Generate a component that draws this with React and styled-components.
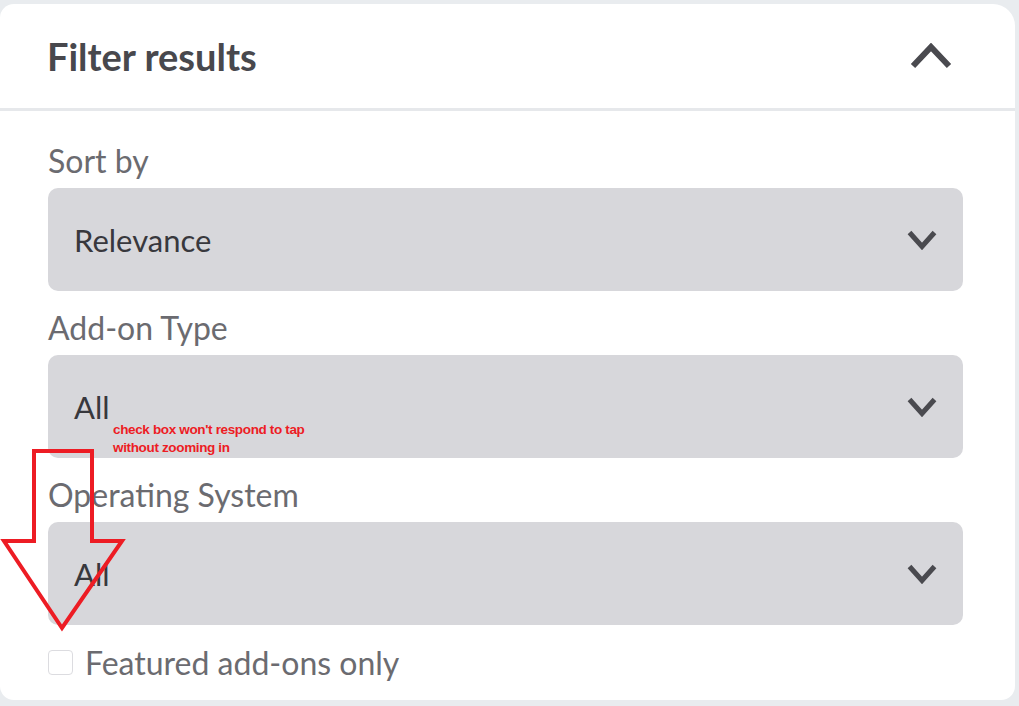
import React from "react";
import styled, { createGlobalStyle } from "styled-components";

const Global = createGlobalStyle`
  html, body {
    margin: 0;
    padding: 0;
    background: #e9ecef;
  }
  body {
    font-family: Lato, "Open Sans", sans-serif;
    overflow: hidden;
  }
`;

const Page = styled.div`
  position: relative;
  width: 1019px;
  height: 706px;
  padding-top: 4px;
  box-sizing: border-box;
`;

const Card = styled.section`
  width: 1015px;
  height: 696px;
  background: #fff;
  border-radius: 14px 22px 14px 14px;
  overflow: hidden;
`;

const Header = styled.header`
  height: 104px;
  display: flex;
  align-items: center;
  justify-content: space-between;
  padding: 0 63px 0 47px;
  border-bottom: 3px solid #e6e8eb;
`;

const Title = styled.h2`
  margin: 0;
  font-size: 38px;
  font-weight: 700;
  color: #48484d;
`;

const Body = styled.div`
  padding: 13px 52px 0 48px;
`;

const Label = styled.div`
  height: 64px;
  box-sizing: border-box;
  padding-top: 9px;
  display: flex;
  align-items: center;
  font-size: 32px;
  color: #6b6b70;
`;

const Select = styled.div`
  height: 103px;
  display: flex;
  align-items: center;
  justify-content: space-between;
  padding: 0 26px;
  box-sizing: border-box;
  background: #d7d7db;
  border-radius: 10px;
  font-size: 31px;
  color: #38383d;
`;

const CheckRow = styled.label`
  display: flex;
  align-items: center;
  gap: 12px;
  margin-top: 18px;
  font-size: 32px;
  color: #6b6b70;
`;

const Box = styled.span`
  width: 25px;
  height: 25px;
  box-sizing: border-box;
  border: 1px solid #dcdce0;
  border-radius: 4px;
  background: #fff;
`;

const Note = styled.div`
  position: absolute;
  left: 113px;
  top: 421px;
  font-family: "Liberation Sans", Arial, sans-serif;
  font-weight: 700;
  font-size: 13.5px;
  letter-spacing: -0.35px;
  line-height: 18px;
  color: #ed1c24;
`;

const Arrow = styled.svg`
  position: absolute;
  left: 0;
  top: 0;
  pointer-events: none;
`;

const Chevron = ({ up, w, h, sw }) => (
  <svg width={w} height={h} viewBox={`0 0 ${w} ${h}`}>
    <polyline
      points={
        up
          ? `${sw / 2},${h - sw / 2} ${w / 2},${sw / 2 + 1} ${w - sw / 2},${h - sw / 2}`
          : `${sw / 2},${sw / 2} ${w / 2},${h - sw / 2 - 1} ${w - sw / 2},${sw / 2}`
      }
      fill="none"
      stroke="#4a4a4f"
      strokeWidth={sw}
    />
  </svg>
);

const fields = [
  { label: "Sort by", value: "Relevance" },
  { label: "Add-on Type", value: "All" },
  { label: "Operating System", value: "All" },
];

export default function App() {
  return (
    <Page>
      <Global />
      <Card>
        <Header>
          <Title>Filter results</Title>
          <Chevron up w={42} h={26} sw={6} />
        </Header>
        <Body>
          {fields.map((f) => (
            <React.Fragment key={f.label}>
              <Label>{f.label}</Label>
              <Select>
                <span>{f.value}</span>
                <Chevron w={30} h={20} sw={5} />
              </Select>
            </React.Fragment>
          ))}
          <CheckRow>
            <Box />
            Featured add-ons only
          </CheckRow>
        </Body>
      </Card>
      <Note>
        check box won't respond to tap
        <br />
        without zooming in
      </Note>
      <Arrow width="130" height="640" viewBox="0 0 130 640">
        <polygon
          points="34,451 92,451 92,541 122,541 62,628 4,541 34,541"
          fill="none"
          stroke="#ed1c24"
          strokeWidth="4"
          strokeLinejoin="miter"
        />
      </Arrow>
    </Page>
  );
}
